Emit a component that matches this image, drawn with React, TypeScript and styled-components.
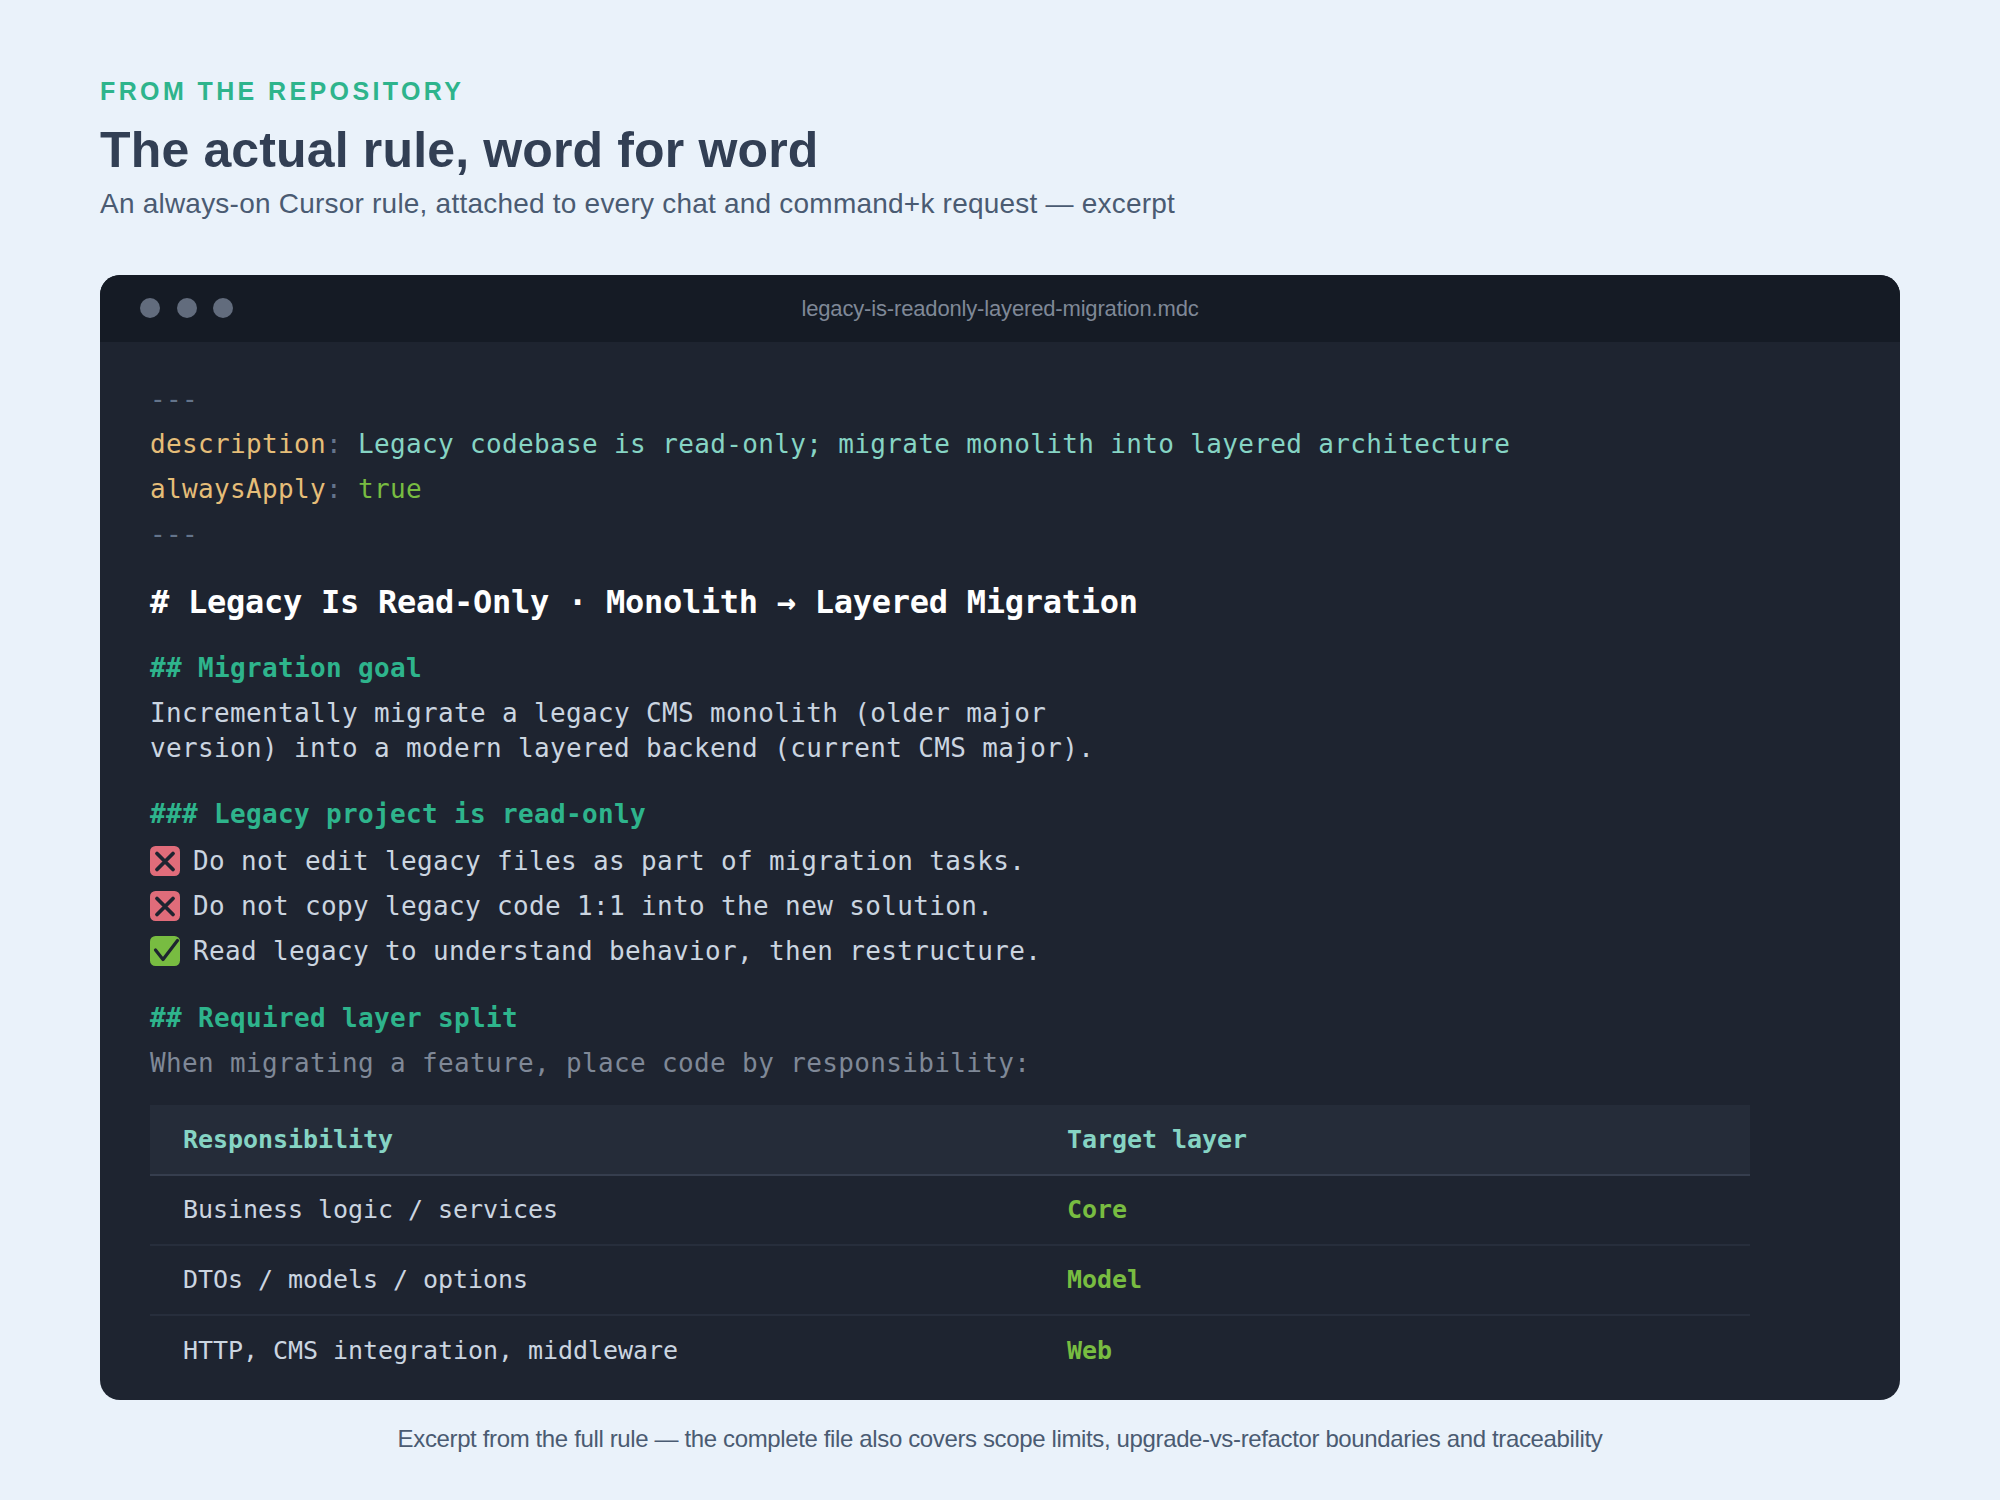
import styled, { createGlobalStyle } from 'styled-components';

const GlobalStyle = createGlobalStyle`
  html, body {
    margin: 0;
    padding: 0;
    background: #eaf2fa;
  }
`;

const ROWS = [
  ['Business logic / services', 'Core'],
  ['DTOs / models / options', 'Model'],
  ['HTTP, CMS integration, middleware', 'Web'],
];

function CrossIcon() {
  return (
    <Icon viewBox="0 0 30 30">
      <rect width="30" height="30" rx="5.5" fill="#e06c7a" />
      <path d="M7 7.5 L23 23.5 M23 7.5 L7 23.5" stroke="#1e2430" strokeWidth="3.8" strokeLinecap="round" />
    </Icon>
  );
}

function CheckIcon() {
  return (
    <Icon viewBox="0 0 30 30">
      <rect width="30" height="30" rx="5.5" fill="#78bc41" />
      <path d="M5.5 14 L13 23.5 L27.5 4.5" stroke="#1e2430" strokeWidth="3.2" strokeLinecap="round" strokeLinejoin="round" fill="none" />
    </Icon>
  );
}

export default function App() {
  return (
    <Page>
      <GlobalStyle />
      <Eyebrow>FROM THE REPOSITORY</Eyebrow>
      <Title>The actual rule, word for word</Title>
      <Subtitle>An always-on Cursor rule, attached to every chat and command+k request — excerpt</Subtitle>
      <Card>
        <TitleBar>
          <Dots>
            <Dot />
            <Dot />
            <Dot />
          </Dots>
          <FileName>legacy-is-readonly-layered-migration.mdc</FileName>
        </TitleBar>
        <Body>
          <FrontLine $color="#64748b">---</FrontLine>
          <FrontLine>
            <Key>description</Key>
            <Muted>: </Muted>
            <Value>Legacy codebase is read-only; migrate monolith into layered architecture</Value>
          </FrontLine>
          <FrontLine>
            <Key>alwaysApply</Key>
            <Muted>: </Muted>
            <Bool>true</Bool>
          </FrontLine>
          <FrontLine $color="#64748b">---</FrontLine>
          <H1>#&nbsp;Legacy Is Read-Only · Monolith → Layered Migration</H1>
          <H2>## Migration goal</H2>
          <Paragraph>
            Incrementally migrate a legacy CMS monolith (older major
            <br />
            version) into a modern layered backend (current CMS major).
          </Paragraph>
          <H3>### Legacy project is read-only</H3>
          <List>
            <ListRow>
              <CrossIcon />
              Do not edit legacy files as part of migration tasks.
            </ListRow>
            <ListRow>
              <CrossIcon />
              Do not copy legacy code 1:1 into the new solution.
            </ListRow>
            <ListRow>
              <CheckIcon />
              Read legacy to understand behavior, then restructure.
            </ListRow>
          </List>
          <H2b>## Required layer split</H2b>
          <Note>When migrating a feature, place code by responsibility:</Note>
          <Table>
            <thead>
              <tr>
                <Th>Responsibility</Th>
                <Th>Target layer</Th>
              </tr>
            </thead>
            <tbody>
              {ROWS.map(([responsibility, layer]) => (
                <Row key={layer}>
                  <Td>{responsibility}</Td>
                  <LayerCell>{layer}</LayerCell>
                </Row>
              ))}
            </tbody>
          </Table>
        </Body>
      </Card>
      <Caption>Excerpt from the full rule — the complete file also covers scope limits, upgrade-vs-refactor boundaries and traceability</Caption>
    </Page>
  );
}

const Page = styled.div`
  width: 2000px;
  height: 1500px;
  box-sizing: border-box;
  padding: 76px 100px 0;
  background: #eaf2fa;
  font-family: 'Liberation Sans', Arial, sans-serif;
`;

const Eyebrow = styled.div`
  font-size: 25px;
  line-height: 30px;
  font-weight: 700;
  letter-spacing: 3.39px;
  color: #2eb48c;
`;

const Title = styled.h1`
  margin: 15px 0 0;
  font-size: 50px;
  line-height: 58px;
  font-weight: 700;
  letter-spacing: 0.15px;
  color: #323f54;
`;

const Subtitle = styled.p`
  margin: 8px 0 0;
  font-size: 28px;
  line-height: 34px;
  letter-spacing: 0.22px;
  color: #4a5b72;
`;

const Card = styled.div`
  margin-top: 54px;
  border-radius: 20px;
  overflow: hidden;
  background: #1e2430;
`;

const TitleBar = styled.div`
  position: relative;
  display: flex;
  align-items: center;
  justify-content: center;
  height: 67px;
  background: #151b25;
`;

const Dots = styled.div`
  position: absolute;
  left: 40px;
  top: 23px;
  display: flex;
  gap: 16.67px;
`;

const Dot = styled.span`
  width: 20px;
  height: 20px;
  border-radius: 50%;
  background: #626c7d;
`;

const FileName = styled.span`
  font-size: 22px;
  letter-spacing: -0.16px;
  color: #7f8897;
`;

const Body = styled.div`
  padding: 35px 50px 15px;
  font-family: 'DejaVu Sans Mono', monospace;
  font-size: 26px;
  letter-spacing: 0.35px;
  color: #cbd5e0;
`;

const FrontLine = styled.div<{ $color?: string }>`
  line-height: 45px;
  color: ${(p) => p.$color ?? 'inherit'};
`;

const Key = styled.span`
  color: #e5bd78;
`;

const Muted = styled.span`
  color: #64748b;
`;

const Value = styled.span`
  color: #86d4c4;
`;

const Bool = styled.span`
  color: #78bc41;
`;

const H1 = styled.div`
  margin-top: 23px;
  font-size: 32px;
  line-height: 44px;
  font-weight: 700;
  letter-spacing: -0.27px;
  color: #ffffff;
`;

const H2 = styled.div`
  margin-top: 24px;
  font-size: 26px;
  line-height: 40px;
  font-weight: 700;
  color: #2eb48c;
`;

const H2b = styled(H2)`
  margin-top: 25px;
`;

const H3 = styled(H2)`
  margin-top: 28px;
`;

const Paragraph = styled.p`
  margin: 8px 0 0;
  line-height: 35px;
`;

const List = styled.div`
  margin-top: 4px;
`;

const ListRow = styled.div`
  display: flex;
  align-items: center;
  gap: 13px;
  height: 45px;
`;

const Icon = styled.svg`
  width: 30px;
  height: 30px;
  flex: none;
`;

const Note = styled.div`
  margin-top: 3px;
  line-height: 45px;
  color: #7f8897;
`;

const Table = styled.table`
  width: 1600px;
  margin-top: 19px;
  border-collapse: collapse;
  font-size: 25px;
  letter-spacing: -0.05px;
`;

const Th = styled.th`
  height: 69px;
  padding: 0 33px;
  text-align: left;
  font-weight: 700;
  color: #86d4c4;
  background: #252c39;
  border-bottom: 2px solid #363e4e;

  &:first-child {
    width: 818px;
  }
`;

const Row = styled.tr`
  height: 70px;
  border-bottom: 2px solid #272e3c;

  &:last-child {
    border-bottom: none;
  }
`;

const Td = styled.td`
  padding: 0 33px 1px;
`;

const LayerCell = styled(Td)`
  font-weight: 700;
  color: #78bc41;
`;

const Caption = styled.div`
  margin-top: 24px;
  text-align: center;
  font-size: 24px;
  line-height: 30px;
  letter-spacing: -0.365px;
  color: #4a5b72;
`;
